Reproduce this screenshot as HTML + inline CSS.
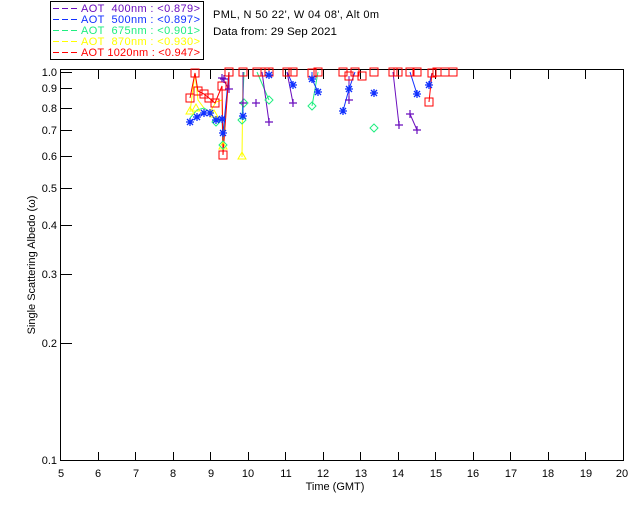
<!DOCTYPE html>
<html><head><meta charset="utf-8"><style>
html,body{margin:0;padding:0;background:#fff;}
svg{display:block;}
text{font-family:"Liberation Sans","DejaVu Sans",sans-serif;font-size:11px;}
</style></head><body>
<svg width="640" height="512" viewBox="0 0 640 512" xmlns="http://www.w3.org/2000/svg">
<rect width="640" height="512" fill="#fff"/>
<rect x="50.5" y="1.5" width="153" height="58" fill="none" stroke="#000"/>
<g stroke-dasharray="6,3" stroke-width="1">
<line x1="53" y1="8.5" x2="78" y2="8.5" stroke="#6a0dbd"/>
<line x1="53" y1="19.5" x2="78" y2="19.5" stroke="#1030ff"/>
<line x1="53" y1="30.5" x2="78" y2="30.5" stroke="#20ee80"/>
<line x1="53" y1="41.5" x2="78" y2="41.5" stroke="#ffff00"/>
<line x1="53" y1="52.5" x2="78" y2="52.5" stroke="#ff0000"/>
</g>
<g font-size="10.5">
<text x="81" y="12" fill="#6a0dbd" textLength="119" lengthAdjust="spacing" xml:space="preserve">AOT  400nm : &lt;0.879&gt;</text>
<text x="81" y="23" fill="#1030ff" textLength="119" lengthAdjust="spacing" xml:space="preserve">AOT  500nm : &lt;0.897&gt;</text>
<text x="81" y="34" fill="#20ee80" textLength="119" lengthAdjust="spacing" xml:space="preserve">AOT  675nm : &lt;0.901&gt;</text>
<text x="81" y="45" fill="#ffff00" textLength="119" lengthAdjust="spacing" xml:space="preserve">AOT  870nm : &lt;0.930&gt;</text>
<text x="81" y="56" fill="#ff0000" textLength="119" lengthAdjust="spacing" xml:space="preserve">AOT 1020nm : &lt;0.947&gt;</text>
</g>
<text x="213" y="18" font-size="10.5" textLength="166" lengthAdjust="spacing">PML, N 50 22', W 04 08', Alt 0m</text>
<text x="213" y="35" font-size="10.5" textLength="124" lengthAdjust="spacingAndGlyphs">Data from: 29 Sep 2021</text>
<rect x="60.5" y="69.5" width="563" height="391" fill="none" stroke="#000"/>
<g stroke="#000">
<line x1="61" y1="72.5" x2="72" y2="72.5"/>
<line x1="61" y1="88.5" x2="72" y2="88.5"/>
<line x1="61" y1="108.5" x2="72" y2="108.5"/>
<line x1="61" y1="130.5" x2="72" y2="130.5"/>
<line x1="61" y1="156.5" x2="72" y2="156.5"/>
<line x1="61" y1="188.5" x2="72" y2="188.5"/>
<line x1="61" y1="225.5" x2="72" y2="225.5"/>
<line x1="61" y1="274.5" x2="72" y2="274.5"/>
<line x1="61" y1="343.5" x2="72" y2="343.5"/>
</g>
<g font-size="10.5" text-anchor="end">
<text x="57" y="76">1.0</text><text x="57" y="92">0.9</text><text x="57" y="112">0.8</text>
<text x="57" y="134">0.7</text><text x="57" y="160">0.6</text><text x="57" y="192">0.5</text>
<text x="57" y="229">0.4</text><text x="57" y="278">0.3</text><text x="57" y="347">0.2</text>
<text x="57" y="464">0.1</text>
</g>
<g stroke="#000">
<path d="M98.5 70v9M135.5 70v9M173.5 70v9M210.5 70v9M248.5 70v9M285.5 70v9M323.5 70v9M360.5 70v9M398.5 70v9M435.5 70v9M473.5 70v9M510.5 70v9M548.5 70v9M585.5 70v9"/>
<path d="M98.5 460v-8M135.5 460v-8M173.5 460v-8M210.5 460v-8M248.5 460v-8M285.5 460v-8M323.5 460v-8M360.5 460v-8M398.5 460v-8M435.5 460v-8M473.5 460v-8M510.5 460v-8M548.5 460v-8M585.5 460v-8"/>
</g>
<g font-size="10" text-anchor="middle">
<text x="61" y="477">5</text><text x="98" y="477">6</text><text x="136" y="477">7</text><text x="173" y="477">8</text>
<text x="211" y="477">9</text><text x="248" y="477">10</text><text x="286" y="477">11</text><text x="323" y="477">12</text>
<text x="361" y="477">13</text><text x="398" y="477">14</text><text x="436" y="477">15</text><text x="473" y="477">16</text>
<text x="511" y="477">17</text><text x="548" y="477">18</text><text x="586" y="477">19</text><text x="622" y="477">20</text>
<text x="335" y="490">Time (GMT)</text>
</g>
<text transform="translate(35,265) rotate(-90)" text-anchor="middle" font-size="10">Single Scattering Albedo (ω)</text>
<g fill="none" stroke-width="1">
<polyline stroke="#ffff00" points="190,112 195,73 198,100 204,108 210,112 216,102 222,100 223,147 229,72"/>
<polyline stroke="#ffff00" points="243,72 242,157"/>
<polyline stroke="#20ee80" points="190,118 197,110 204,108 210,112 216,122 222,118 223,145 229,72"/>
<polyline stroke="#20ee80" points="244,72 242,120"/>
<polyline stroke="#20ee80" points="257,72 269,100"/>
<polyline stroke="#20ee80" points="318,72 312,106"/>
<polyline stroke="#1030ff" points="190,122 197,117 204,113 210,113 216,120 222,119 223,133 229,72"/>
<polyline stroke="#1030ff" points="243,72 243,116"/>
<polyline stroke="#1030ff" points="265,72 269,75"/>
<polyline stroke="#1030ff" points="287,72 293,85"/>
<polyline stroke="#1030ff" points="312,72 312,79 318,92"/>
<polyline stroke="#1030ff" points="355,72 349,89 343,111"/>
<polyline stroke="#1030ff" points="410,72 417,94"/>
<polyline stroke="#1030ff" points="432,73 429,85"/>
<polyline stroke="#6a0dbd" points="222,78 229,89 229,72"/>
<polyline stroke="#6a0dbd" points="243,72 243,103"/>
<polyline stroke="#6a0dbd" points="262,72 269,122"/>
<polyline stroke="#6a0dbd" points="287,72 293,103"/>
<polyline stroke="#6a0dbd" points="349,76 349,100"/>
<polyline stroke="#6a0dbd" points="393,72 399,125"/>
<polyline stroke="#6a0dbd" points="410,114 417,130"/>
<polyline stroke="#ff0000" points="190,98 195,73 198,91 204,94 209,98 215,103 222,86 223,155 229,72"/>
<polyline stroke="#ff0000" points="432,73 429,102"/>
</g>
<g fill="none" stroke="#ff0000">
<rect x="186" y="94" width="8" height="8"/><rect x="191" y="69" width="8" height="8"/><rect x="194" y="87" width="8" height="8"/>
<rect x="200" y="90" width="8" height="8"/><rect x="205" y="94" width="8" height="8"/><rect x="211" y="99" width="8" height="8"/>
<rect x="218" y="82" width="8" height="8"/><rect x="219" y="151" width="8" height="8"/><rect x="225" y="68" width="8" height="8"/>
<rect x="239" y="68" width="8" height="8"/><rect x="253" y="68" width="8" height="8"/><rect x="261" y="68" width="8" height="8"/>
<rect x="265" y="68" width="8" height="8"/><rect x="283" y="68" width="8" height="8"/><rect x="289" y="68" width="8" height="8"/>
<rect x="308" y="69" width="8" height="8"/><rect x="314" y="68" width="8" height="8"/><rect x="339" y="68" width="8" height="8"/>
<rect x="345" y="72" width="8" height="8"/><rect x="351" y="68" width="8" height="8"/><rect x="358" y="72" width="8" height="8"/>
<rect x="370" y="68" width="8" height="8"/><rect x="389" y="68" width="8" height="8"/><rect x="394" y="68" width="8" height="8"/>
<rect x="406" y="68" width="8" height="8"/><rect x="413" y="68" width="8" height="8"/><rect x="428" y="69" width="8" height="8"/>
<rect x="425" y="98" width="8" height="8"/><rect x="433" y="68" width="8" height="8"/><rect x="441" y="68" width="8" height="8"/>
<rect x="449" y="68" width="8" height="8"/>
</g>
<g fill="none" stroke="#ffff00">
<path d="M190 107l4 7h-8z M242 152l4 7h-8z M223 142l4 7h-8z M196 104l4 7h-8z M214 110l4 7h-8z"/>
</g>
<g fill="none" stroke="#20ee80">
<path d="M244 99l4 4-4 4-4-4z M242 116l4 4-4 4-4-4z M269 96l4 4-4 4-4-4z M312 102l4 4-4 4-4-4z M223 141l4 4-4 4-4-4z M374 124l4 4-4 4-4-4z M216 118l4 4-4 4-4-4z"/>
</g>
<g stroke="#1030ff" stroke-width="1.3">
<path d="M186 122h8M190 118v8M187 119l6 6M193 119l-6 6 M193 117h8M197 113v8M194 114l6 6M200 114l-6 6 M200 113h8M204 109v8M201 110l6 6M207 110l-6 6 M206 113h8M210 109v8M207 110l6 6M213 110l-6 6 M212 120h8M216 116v8M213 117l6 6M219 117l-6 6 M218 119h8M222 115v8M219 116l6 6M225 116l-6 6 M219 133h8M223 129v8M220 130l6 6M226 130l-6 6 M239 116h8M243 112v8M240 113l6 6M246 113l-6 6 M265 75h8M269 71v8M266 72l6 6M272 72l-6 6 M289 85h8M293 81v8M290 82l6 6M296 82l-6 6 M308 79h8M312 75v8M309 76l6 6M315 76l-6 6 M314 92h8M318 88v8M315 89l6 6M321 89l-6 6 M345 89h8M349 85v8M346 86l6 6M352 86l-6 6 M339 111h8M343 107v8M340 108l6 6M346 108l-6 6 M370 93h8M374 89v8M371 90l6 6M377 90l-6 6 M413 94h8M417 90v8M414 91l6 6M420 91l-6 6 M425 85h8M429 81v8M426 82l6 6M432 82l-6 6"/>
</g>
<g stroke="#6a0dbd" stroke-width="1.2">
<path d="M218 78h8M222 74v8 M225 89h8M229 85v8 M239 103h8M243 99v8 M252 103h8M256 99v8 M265 122h8M269 118v8 M289 103h8M293 99v8 M345 100h8M349 96v8 M395 125h8M399 121v8 M406 114h8M410 110v8 M413 130h8M417 126v8 M220 79h8M224 75v8"/>
</g>
</svg>
</body></html>
